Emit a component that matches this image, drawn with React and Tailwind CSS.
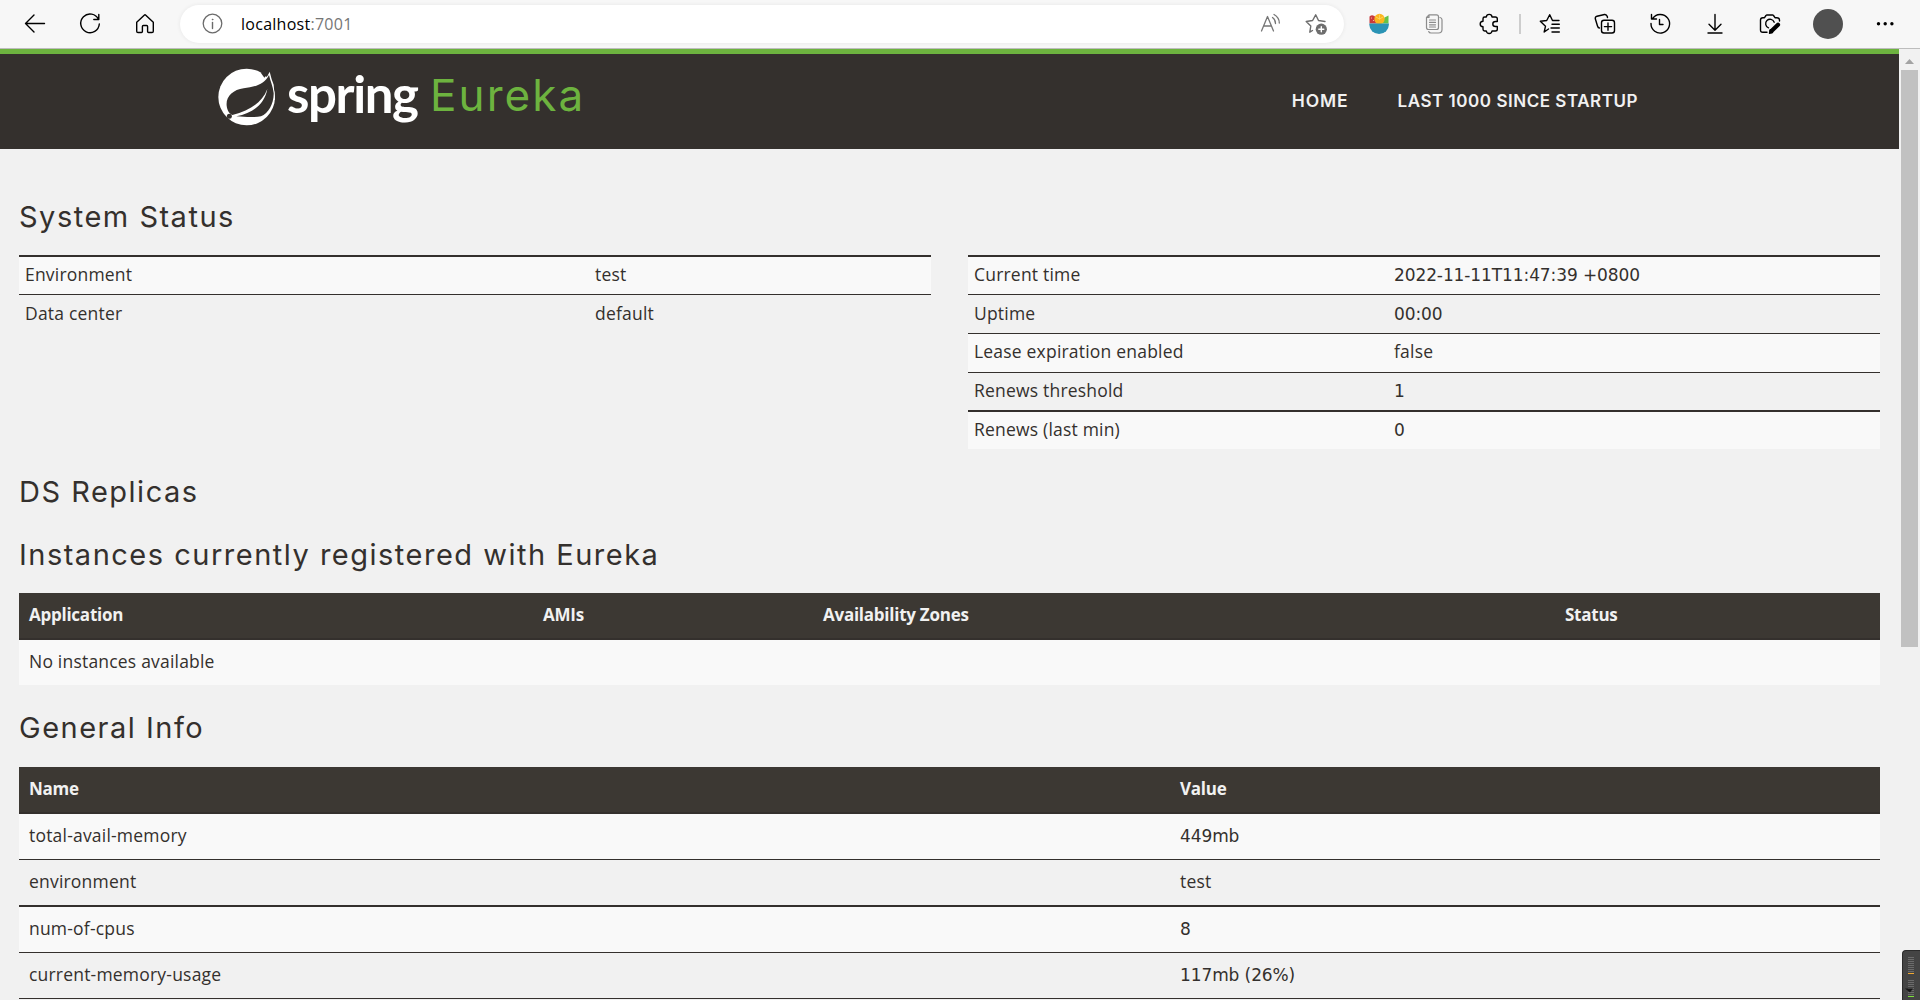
import React from "react";

function Icon({ children, className = "text-black", w = 24 }) {
  return (
    <svg width={w} height="24" viewBox={`0 0 ${w} 24`} fill="none" stroke="currentColor" strokeWidth="1.4" strokeLinecap="round" strokeLinejoin="round" className={`shrink-0 ${className}`}>
      {children}
    </svg>
  );
}

function Cell({ children }) {
  return <div className="flex w-[55px] shrink-0 justify-center">{children}</div>;
}

function Toolbar() {
  return (
    <div className="flex h-[49px] items-center border-b border-[#bdbdbd] bg-[#f7f7f7] pl-[23px]">
      <Icon>
        <path d="M21.5 11.5H2.5M11 3 2.500 11.500 11 20" />
      </Icon>
      <Icon className="ml-[31px] text-black">
        <path d="M20.500 7.500A9.300 9.300 0 1 0 21.300 12M20.800 2.500V7.500H15.800" />
      </Icon>
      <Icon className="ml-[31px] text-black">
        <path d="M3.700 10.300 11.200 3.200Q12 2.500 12.800 3.200L20.300 10.300V19.200Q20.300 20.500 19 20.500H15.600Q14.600 20.500 14.600 19.500V14.500Q14.600 13.500 13.600 13.500H10.400Q9.400 13.500 9.400 14.500V19.500Q9.400 20.500 8.400 20.500H5Q3.700 20.500 3.700 19.200Z" />
      </Icon>
      <div className="ml-[23px] flex h-[38px] w-[1164px] shrink-0 items-center rounded-full bg-white pr-4 pl-5 shadow-[0_0_4px_rgba(0,0,0,0.07)]">
        <Icon className="text-[#6b6b6b]">
          <circle cx="12.500" cy="11.500" r="9.300" strokeWidth="1.300" />
          <path d="M12.500 10.500V16.500" />
          <circle cx="12.500" cy="7.500" r="0.500" fill="currentColor" strokeWidth="0.600" />
        </Icon>
        <div className="ml-[17px] grow font-['Open_Sans',sans-serif] text-base leading-6 tracking-[0.27px] whitespace-nowrap text-black">
          localhost<span className="text-[#767676]">:7001</span>
        </div>
        <Icon className="text-[#767676]">
          <path d="M2.500 19 8.500 4.500 14.500 19M4.600 14H12.400M13.500 5.500Q16.500 7.500 16.500 11.500M15 2.500Q20.300 5.500 20.300 11" strokeWidth="1.300" />
        </Icon>
        <Icon className="ml-[21px] text-[#6e6e6e]">
          <path d="M8.500 18.500 5.800 20.200 6.800 14 2.200 9.500 8.600 8.500 11.700 2.800 14.500 8.500 21 9.500" />
          <circle cx="17.300" cy="17.200" r="5.600" fill="currentColor" stroke="none" />
          <path d="M17.300 14.700V19.700M14.800 17.200H19.800" stroke="white" />
        </Icon>
      </div>
      <div className="ml-[7px] flex items-center">
        <Cell>
          <Icon>
            <g stroke="none">
              <path d="M2.500 4.500Q6 1.500 9.500 6L11 11.500H2.500Z" fill="#c93b3c" />
              <path d="M17.500 5.500 21.500 3.500V11.500H15Z" fill="#64c348" />
              <circle cx="12.500" cy="7" r="5.200" fill="#fbb61f" />
              <path d="M2.300 11.500H21.900V12.500A9.800 9.500 0 0 1 2.300 12.500Z" fill="#2b94b5" />
            </g>
            <path d="M12.500 3V7M9 5 12.500 7 16 5" stroke="#ffd968" strokeWidth="0.800" />
            <path d="M4.500 6V6.100M6.500 8.500V8.600" stroke="#f2c3b4" strokeWidth="1" />
          </Icon>
        </Cell>
        <Cell>
          <Icon className="text-[#8c8c8c]">
            <path d="M7 2.800H14.500Q16.500 2.800 16.500 4.800V15.500Q16.500 17.500 14.500 17.500H6.500Q4.500 17.500 4.500 15.500V5.300ZM4.500 5.500H7V3M18 5.500Q20 5.800 20 7.800V17.500Q20 21 16.500 21H9Q7.200 21 6.700 19.500M7.500 8H13.500M7.500 10.400H13.500M7.500 12.800H13.500M7.500 15H13.500" strokeWidth="1.200" />
          </Icon>
        </Cell>
        <Cell>
          <Icon>
            <path d="M7.700 5H9.300Q9.600 2.400 12.200 2.400T15 5H18.300Q20.300 5 20.300 6.800V9.500H18.500Q15.800 9.500 15.800 12T18.500 14.500H20.300V17.200Q20.300 19 18.300 19H15Q14.700 21.500 12.200 21.500T9.300 19H7.700Q6 19 6 17.300V14.800Q3.200 14.500 3.200 12T6 9.300V6.700Q6 5 7.700 5Z" />
          </Icon>
        </Cell>
        <div className="mr-px ml-[3px] h-5 w-0.5 bg-[#cdcdcd]" />
        <Cell>
          <Icon>
            <path d="M10.500 17 6.200 20 7.500 14.200 2.300 9.300 8.700 8.500 11.700 2.700 14.500 8.500H21M14 12.300H21.300M13 16H21.300M14 20H21.300" />
          </Icon>
        </Cell>
        <Cell>
          <Icon>
            <path d="M6.500 16Q5 16 4.500 14L2.300 6.800Q2 4.800 4 4.200L11.500 2.500Q13.500 2.200 14.300 4.500L14.500 5.500" />
            <rect x="8.500" y="8.300" width="13" height="12.700" rx="2.500" />
            <path d="M15 11V18.200M11.400 14.600H18.600" />
          </Icon>
        </Cell>
        <Cell>
          <Icon>
            <path d="M3 11.500A9.300 9.300 0 1 0 4.500 6.700M3.500 2.500V7H8.500M11.500 7.500V12.500H15" />
          </Icon>
        </Cell>
        <Cell>
          <Icon>
            <path d="M12 2.500V18M6 12.300 12 18.300 18 12.300M5 21H19" />
          </Icon>
        </Cell>
        <Cell>
          <Icon>
            <path d="M9 20.300H4.800Q2.500 20.300 2.500 18V8Q2.500 5.700 4.800 5.700H6.500L8 3.500Q8.300 3 9 3H14.500Q15.200 3 15.500 3.500L17 5.700H19Q21.500 5.700 21.500 8V9" />
            <path d="M10.500 15.800A4.400 4.400 0 1 1 16.200 10.200" />
            <path d="M13.500 19 20 12.700" strokeWidth="4.200" />
            <path d="M11.500 21.200 12.200 17.800 14.500 20.500Z" fill="currentColor" />
          </Icon>
        </Cell>
        <div className="mr-[15px] ml-4 size-[30px] rounded-full bg-[#505050]" />
        <Cell>
          <Icon>
            <g fill="currentColor" stroke="none">
              <circle cx="4.500" cy="11.700" r="1.700" />
              <circle cx="11.200" cy="11.700" r="1.700" />
              <circle cx="17.900" cy="11.700" r="1.700" />
            </g>
          </Icon>
        </Cell>
      </div>
    </div>
  );
}

function SpringLeaf() {
  return (
    <svg width="60" height="60" viewBox="50 52 180 180" className="shrink-0">
      <circle cx="139" cy="142" r="85" fill="#fff" />
      <path d="M192 88Q204 78 208 66Q213 88 220 105L224 150L200 160Z" fill="#fff" />
      <path d="M206 76C192 106 160 112 130 116C98 120 76 142 79 168C81 184 88 192 96 196C150 182 186 158 201 118C193 162 160 190 108 200C140 203 165 203 182 200C205 190 221 160 220 130C218 110 210 95 206 76Z" fill="#34302d" />
      <path d="M192 60L205 63Q201 76 192 84L182 70Z" fill="#34302d" />
      <circle cx="87" cy="200" r="7.500" fill="#34302d" />
    </svg>
  );
}

function Header() {
  return (
    <div className="flex h-[100px] border-t-[5px] border-[#6db33f] bg-[#34302d] pl-[217px]">
      <div className="mt-[13px]">
        <SpringLeaf />
      </div>
      <div className="mt-[10px] ml-[10px] w-[145px] font-['Lato',sans-serif] text-[51px] leading-[60px] font-bold tracking-[-1.4px] text-white">spring</div>
      <div className="mt-[11px] -ml-[2px] w-[170px] font-['Inter',sans-serif] text-[44px] leading-[60px] tracking-[2.1px] text-[#6db33f]">Eureka</div>
      <div className="ml-auto flex gap-[49px] pt-[35px] pr-[261px] font-['Inter',sans-serif] text-[17px] leading-6 font-semibold tracking-[0.53px] whitespace-nowrap text-[#f1f1f1]">
        <span className="text-[17.5px] tracking-[0.9px]">HOME</span>
        <span>LAST 1000 SINCE STARTUP</span>
      </div>
    </div>
  );
}

function Heading({ children, className }) {
  return <h1 className={`font-['Inter',sans-serif] text-[29px] leading-[33px] font-normal tracking-[1.5px] whitespace-nowrap text-[#34302d] ${className}`}>{children}</h1>;
}

const WORD = "font-['Open_Sans',sans-serif] text-[17.5px] tracking-[0.2px]";
const NUM = "font-['DejaVu_Sans',sans-serif] text-[17px] tracking-[-0.1px]";

function Row({ label, value, className, labelWidth }) {
  return (
    <div className={`flex items-baseline border-[#34302d] whitespace-nowrap ${className}`}>
      <div className={`shrink-0 ${WORD} ${labelWidth}`}>{label}</div>
      <div className={/\d/.test(value) ? NUM : WORD}>{value}</div>
    </div>
  );
}

const STATUS = "pl-[6px] leading-[25px]";
const INFO = "pl-[10px] leading-[25px]";

function TableHead({ children }) {
  return (
    <div className="flex h-[47px] border-b-2 border-[#34302d] bg-[#3c3833] pt-[9px] pl-[10px] font-['Open_Sans',sans-serif] text-[17px] leading-[25px] font-bold tracking-[-0.25px] whitespace-nowrap text-[#f1f1f1]">
      {children}
    </div>
  );
}

function Main() {
  return (
    <div className="h-[851px] w-[1899px] overflow-hidden px-[19px] text-[#34302d]">
      <Heading className="mt-[51px]">System Status</Heading>
      <div className="mt-[22px] flex gap-[37px]">
        <div className="w-[912px]">
          <Row label="Environment" value="test" labelWidth="w-[570px]" className={`h-[39px] border-t-2 bg-[#f9f9f9] pt-[5px] ${STATUS}`} />
          <Row label="Data center" value="default" labelWidth="w-[570px]" className={`h-[39px] border-t pt-[6px] ${STATUS}`} />
        </div>
        <div className="w-[912px]">
          <Row label="Current time" value="2022-11-11T11:47:39 +0800" labelWidth="w-[420px]" className={`h-[39px] border-t-2 bg-[#f9f9f9] pt-[5px] ${STATUS}`} />
          <Row label="Uptime" value="00:00" labelWidth="w-[420px]" className={`h-[39px] border-t pt-[6px] ${STATUS}`} />
          <Row label="Lease expiration enabled" value="false" labelWidth="w-[420px]" className={`h-[39px] border-t bg-[#f9f9f9] pt-[5px] ${STATUS}`} />
          <Row label="Renews threshold" value="1" labelWidth="w-[420px]" className={`h-[38px] border-t pt-[5px] ${STATUS}`} />
          <Row label="Renews (last min)" value="0" labelWidth="w-[420px]" className={`h-[39px] border-t-2 bg-[#f9f9f9] pt-[5px] ${STATUS}`} />
        </div>
      </div>
      <Heading className="mt-[26px]">DS Replicas</Heading>
      <Heading className="mt-[30px]">Instances currently registered with Eureka</Heading>
      <div className="mt-[22px]">
        <TableHead>
          <div className="w-[514px]">Application</div>
          <div className="w-[280px]">AMIs</div>
          <div className="w-[742px]">Availability Zones</div>
          <div>Status</div>
        </TableHead>
        <Row label="No instances available" value="" labelWidth="" className={`h-[45px] bg-[#f9f9f9] pt-[9px] ${INFO}`} />
      </div>
      <Heading className="mt-[26px]">General Info</Heading>
      <div className="mt-[23px]">
        <TableHead>
          <div className="w-[1151px]">Name</div>
          <div>Value</div>
        </TableHead>
        <Row label="total-avail-memory" value="449mb" labelWidth="w-[1151px]" className={`h-[45px] bg-[#f9f9f9] pt-[9px] ${INFO}`} />
        <Row label="environment" value="test" labelWidth="w-[1151px]" className={`h-[46px] border-t pt-[9px] ${INFO}`} />
        <Row label="num-of-cpus" value="8" labelWidth="w-[1151px]" className={`h-[47px] border-t-2 bg-[#f9f9f9] pt-[9px] ${INFO}`} />
        <Row label="current-memory-usage" value="117mb (26%)" labelWidth="w-[1151px]" className={`h-[46px] border-t pt-[9px] ${INFO}`} />
        <div className="h-px bg-[#34302d]" />
      </div>
    </div>
  );
}

function Scrollbar() {
  return (
    <div className="relative h-[951px] w-[21px] shrink-0 bg-[#f1f1f1] pl-0.5">
      <div className="flex h-[21px] w-[17px] items-center justify-center pt-[3px]">
        <svg width="9" height="5" viewBox="0 0 9 5">
          <path d="M0 5 4.500 0 9 5Z" fill="#a3a3a3" />
        </svg>
      </div>
      <div className="h-[577px] w-[17px] bg-[#c1c1c1]" />
      <div className="absolute right-0 bottom-0 flex h-[50px] w-[18px] flex-col rounded-tl-sm border-t border-l border-[#2a2a2a] bg-[#444] pt-[6px] pl-[5px]">
        {Array.from({ length: 8 }, (_, i) => (
          <div key={i} className="mb-px h-px w-[6px] bg-[#6b6b6b]" />
        ))}
        <div className="mb-[6px] h-px w-[6px] bg-[#f0a830]" />
        {Array.from({ length: 8 }, (_, i) => (
          <div key={i} className="mb-px h-px w-[6px] bg-[#6b6b6b]" />
        ))}
        <div className="h-px w-[6px] bg-[#7be03a]" />
        <svg width="8" height="5" viewBox="0 0 8 5" className="absolute top-[37px] left-[2px]">
          <path d="M0 0.500H8L5 4.500Z" fill="#161616" />
        </svg>
      </div>
    </div>
  );
}

export default function App() {
  return (
    <div className="h-[1000px] w-[1920px] overflow-hidden bg-[#f1f1f1]">
      <Toolbar />
      <div className="flex">
        <div className="w-[1899px] shrink-0">
          <Header />
          <Main />
        </div>
        <Scrollbar />
      </div>
    </div>
  );
}
